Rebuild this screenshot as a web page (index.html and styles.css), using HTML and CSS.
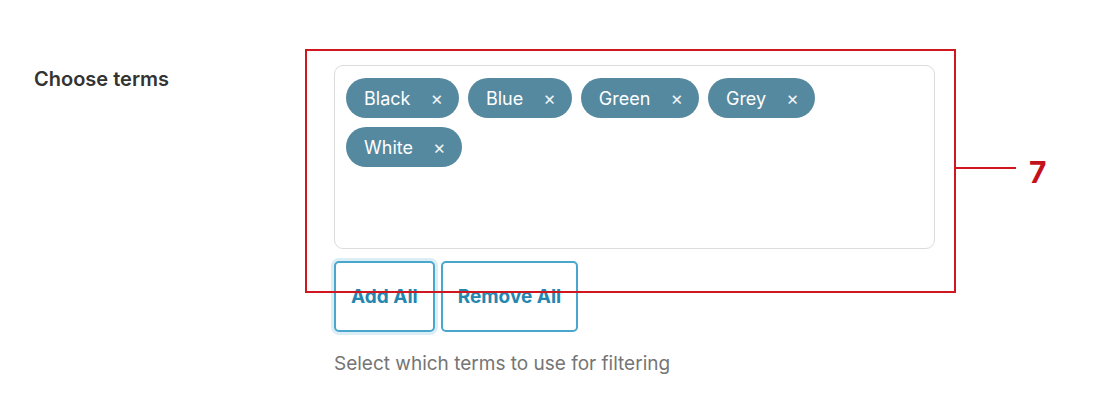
FILE: index.html
```html
<!DOCTYPE html>
<html lang="en">
<head>
    <meta charset="UTF-8">
    <meta name="viewport" content="width=device-width, initial-scale=1.0">
    <title>Choose terms</title>
    <link rel="stylesheet" href="styles.css">
</head>
<body>
    <div class="form-row">
        <label class="field-label">Choose terms</label>
        <div class="field">
            <div class="term-box">
                <span class="term">Black <span class="remove">&times;</span></span>
                <span class="term">Blue <span class="remove">&times;</span></span>
                <span class="term">Green <span class="remove">&times;</span></span>
                <span class="term">Grey <span class="remove">&times;</span></span>
                <span class="term">White <span class="remove">&times;</span></span>
            </div>
            <div class="actions">
                <button class="btn focused">Add All</button>
                <button class="btn">Remove All</button>
            </div>
            <p class="help">Select which terms to use for filtering</p>
        </div>
    </div>

    <!-- annotation overlay -->
    <div class="callout-box"></div>
    <div class="callout-line"></div>
    <div class="callout-num">7</div>
</body>
</html>
```
FILE: styles.css
```css
body {
    margin: 0;
    padding: 0;
    background: #fff;
    font-family: Inter, "Liberation Sans", Arial, sans-serif;
    color: #3c434a;
}

.form-row {
    display: flex;
    padding: 65px 0 0 34px;
}

.field-label {
    width: 300px;
    font-size: 20px;
    font-weight: 600;
    color: #333;
    padding-top: 2px;
}

.field {
    width: 601px;
}

.term-box {
    height: 184px;
    box-sizing: border-box;
    border: 1px solid #dcdcde;
    border-radius: 9px;
    padding: 12px 11px;
    display: flex;
    flex-wrap: wrap;
    align-content: flex-start;
    gap: 9px 9px;
}

.term {
    display: inline-flex;
    align-items: center;
    height: 40px;
    padding: 0 16px 0 18px;
    background: #5589a0;
    color: #fff;
    border-radius: 20px;
    font-size: 18px;
}

.term .remove {
    margin-left: 20px;
    font-size: 19px;
    opacity: 0.9;
}

.actions {
    display: flex;
    gap: 6px;
    margin-top: 12px;
}

.btn {
    height: 71px;
    padding: 0 15px;
    background: #fff;
    border: 2px solid #4aa6cc;
    border-radius: 5px;
    color: #2587b0;
    font-family: inherit;
    font-size: 19px;
    font-weight: bold;
    white-space: nowrap;
}

.btn.focused {
    box-shadow: 0 0 0 3px #dbeef6;
}

.help {
    margin: 20px 0 0;
    font-size: 19px;
    color: #757575;
}

.callout-box {
    position: absolute;
    left: 305px;
    top: 49px;
    width: 647px;
    height: 240px;
    border: 2px solid #d0161f;
}

.callout-line {
    position: absolute;
    left: 956px;
    top: 167px;
    width: 60px;
    height: 2px;
    background: #d0161f;
}

.callout-num {
    position: absolute;
    left: 1029px;
    top: 154px;
    font-size: 30px;
    font-weight: bold;
    color: #c4121c;
}
```
